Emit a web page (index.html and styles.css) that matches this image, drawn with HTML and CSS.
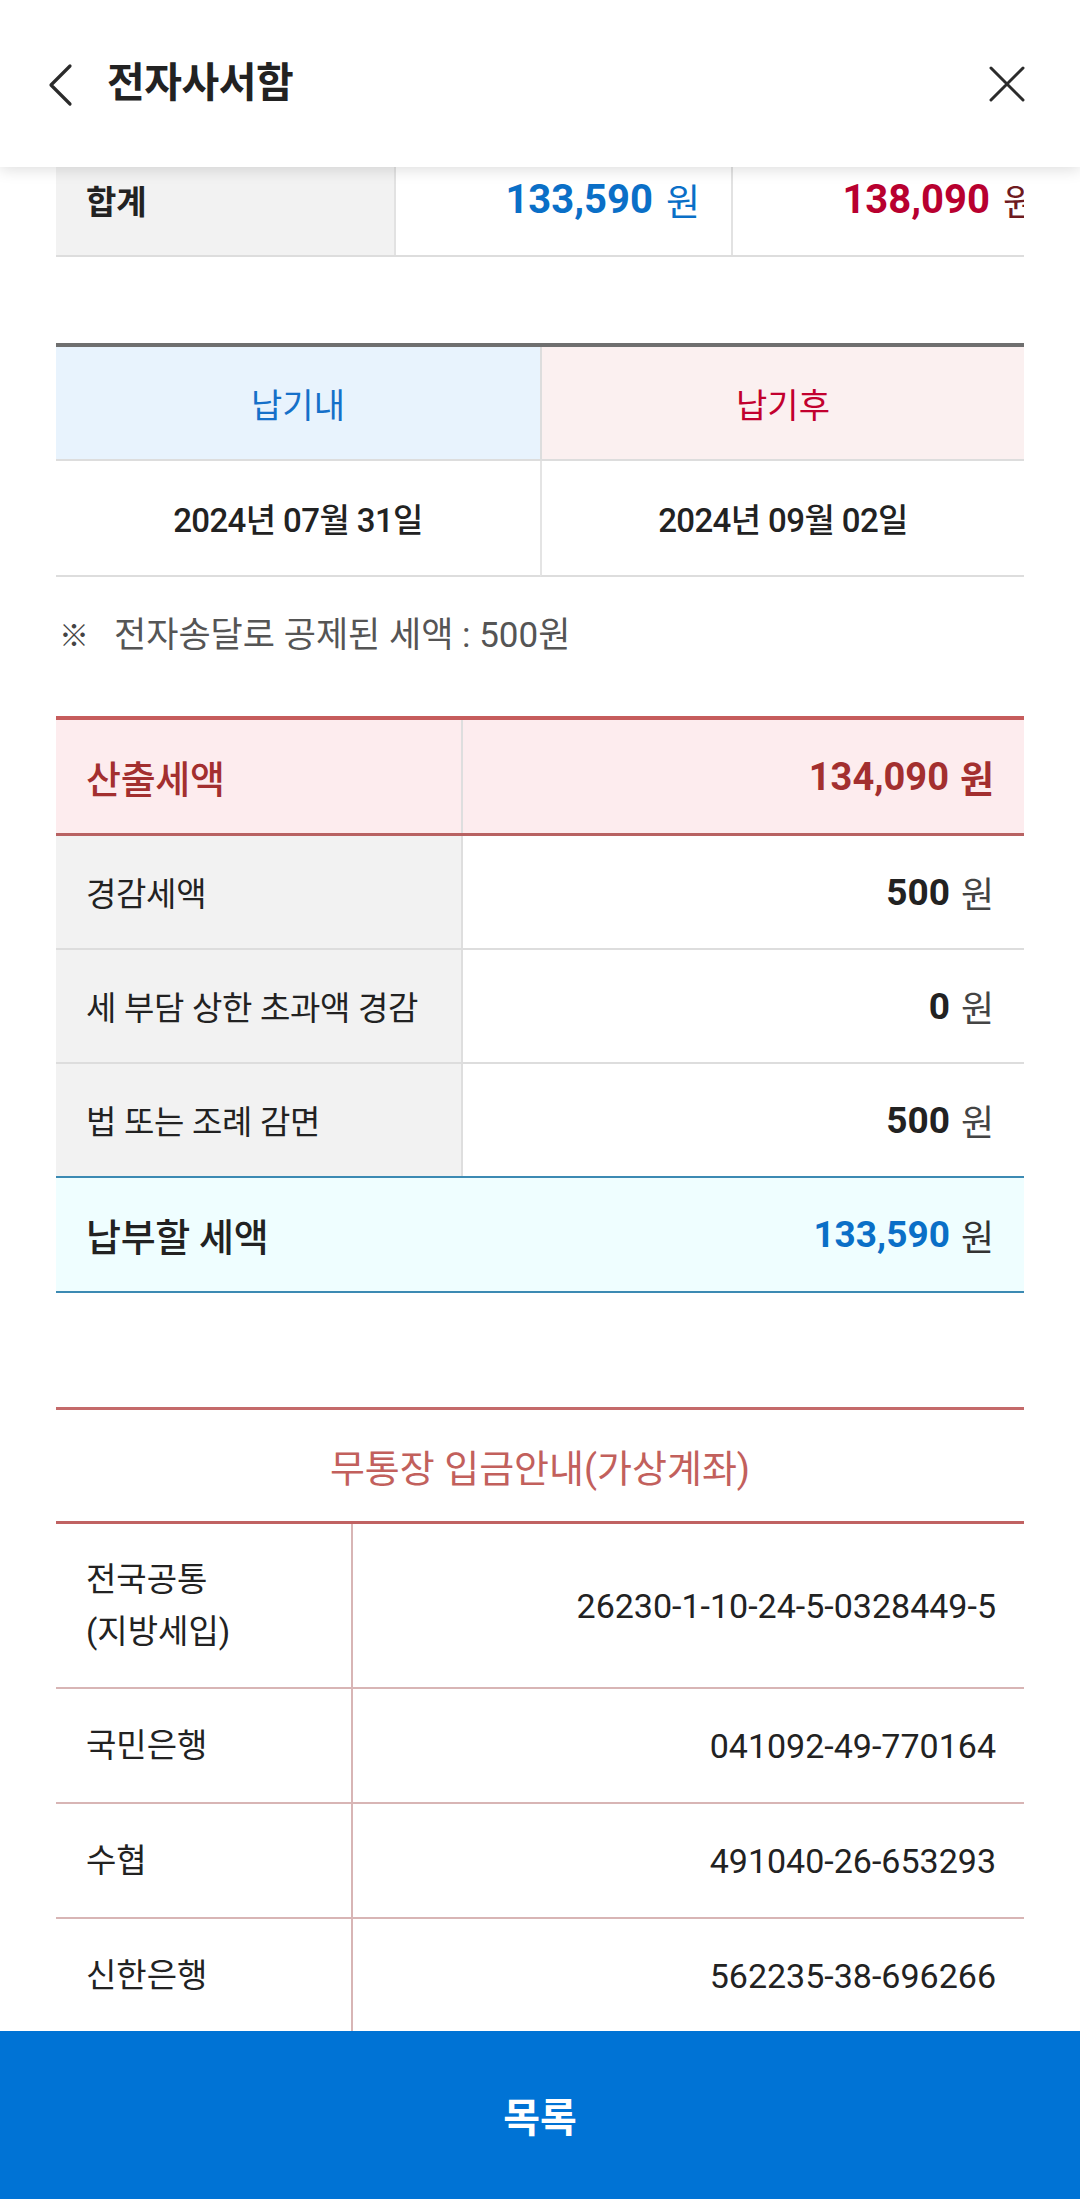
FILE: index.html
```html
<!DOCTYPE html>
<html lang="ko">
<head>
<meta charset="utf-8">
<title>전자사서함</title>
<link rel="stylesheet" href="styles.css">
</head>
<body>
<div class="screen">
  <header class="appbar">
    <svg class="back" width="30" height="44" viewBox="0 0 30 44" aria-hidden="true">
      <polyline points="22,3 3,22 22,41" fill="none" stroke="#2b2b2b" stroke-width="3.2" stroke-linecap="round" stroke-linejoin="round"/>
    </svg>
    <h1 class="title">전자사서함</h1>
    <svg class="close" width="38" height="38" viewBox="0 0 38 38" aria-hidden="true">
      <path d="M3 3 L35 35 M35 3 L3 35" fill="none" stroke="#2b2b2b" stroke-width="3" stroke-linecap="round"/>
    </svg>
  </header>

  <main class="content">
    <div class="sum-wrap">
      <div class="sum-table">
        <div class="sum-label">합계</div>
        <div class="sum-cell"><span class="num c-blue">133,590</span><span class="won c-blue">원</span></div>
        <div class="sum-cell"><span class="num c-red">138,090</span><span class="won c-maroon">원</span></div>
      </div>
    </div>

    <div class="due-table">
      <div class="due-head due-in">납기내</div>
      <div class="due-head due-after">납기후</div>
      <div class="due-date">2024년 07월 31일</div>
      <div class="due-date">2024년 09월 02일</div>
    </div>

    <p class="note"><span class="mark">※</span>전자송달로 공제된 세액 : 500원</p>

    <div class="tax-table">
      <div class="tax-row tax-calc">
        <div class="tax-label">산출세액</div>
        <div class="tax-value"><span class="num">134,090</span><span class="won">원</span></div>
      </div>
      <div class="tax-row">
        <div class="tax-label">경감세액</div>
        <div class="tax-value"><span class="num">500</span><span class="won">원</span></div>
      </div>
      <div class="tax-row">
        <div class="tax-label">세 부담 상한 초과액 경감</div>
        <div class="tax-value"><span class="num">0</span><span class="won">원</span></div>
      </div>
      <div class="tax-row tax-last">
        <div class="tax-label">법 또는 조례 감면</div>
        <div class="tax-value"><span class="num">500</span><span class="won">원</span></div>
      </div>
      <div class="tax-row tax-pay">
        <div class="tax-label">납부할 세액</div>
        <div class="tax-value"><span class="num c-blue">133,590</span><span class="won">원</span></div>
      </div>
    </div>

    <section class="bank">
      <h2 class="bank-title">무통장 입금안내(가상계좌)</h2>
      <div class="bank-table">
        <div class="bank-row bank-tall">
          <div class="bank-name">전국공통<br>(지방세입)</div>
          <div class="bank-acct">26230-1-10-24-5-0328449-5</div>
        </div>
        <div class="bank-row">
          <div class="bank-name">국민은행</div>
          <div class="bank-acct">041092-49-770164</div>
        </div>
        <div class="bank-row">
          <div class="bank-name">수협</div>
          <div class="bank-acct">491040-26-653293</div>
        </div>
        <div class="bank-row">
          <div class="bank-name">신한은행</div>
          <div class="bank-acct">562235-38-696266</div>
        </div>
      </div>
    </section>
  </main>

  <footer class="bottom">
    <button class="list-btn" type="button">목록</button>
  </footer>
</div>
</body>
</html>
```

FILE: styles.css
```css
* { box-sizing: border-box; }

html, body {
  margin: 0;
  padding: 0;
  background: #ffffff;
}

body {
  font-family: Roboto, "Noto Sans CJK KR", "Noto Sans", sans-serif;
  color: #222222;
}

.screen {
  width: 1080px;
  height: 2199px;
  display: flex;
  flex-direction: column;
  overflow: hidden;
}

/* ---------- app bar ---------- */
.appbar {
  position: relative;
  z-index: 2;
  flex: 0 0 167px;
  height: 167px;
  background: #ffffff;
  display: flex;
  align-items: center;
  padding: 0 54px 0 48px;
  box-shadow: 0 3px 14px rgba(0, 0, 0, 0.13);
}

.back { flex: 0 0 auto; margin-top: 2px; }

.title {
  flex: 1;
  margin: 0 0 0 29px;
  font-size: 41px;
  font-weight: 700;
  line-height: 1;
  color: #222222;
  letter-spacing: -0.5px;
}

.close { flex: 0 0 auto; }

/* ---------- content ---------- */
.content {
  flex: 1;
  overflow: hidden;
  margin-top: -23px;
  padding: 0 56px;
}

.num { font-weight: 700; }
.won { font-weight: 400; margin-left: 11px; }
.c-blue { color: #0a6fc7; }
.c-red { color: #b8002f; }
.c-maroon { color: #6e1a1f; }

/* sum row (horizontally clipped table) */
.sum-wrap {
  width: 968px;
  overflow: hidden;
}

.sum-table {
  width: 1012px;
  display: grid;
  grid-template-columns: 338px 337px 337px;
  height: 113px;
  border-bottom: 2px solid #dddddd;
}

.sum-label {
  background: #f2f2f2;
  display: flex;
  align-items: center;
  padding-left: 30px;
  font-size: 33px;
  font-weight: 700;
  color: #222222;
}

.sum-cell {
  border-left: 2px solid #e2e2e2;
  display: flex;
  align-items: center;
  justify-content: flex-end;
  padding-right: 31px;
  font-size: 40px;
}

.sum-cell .won { font-size: 37px; margin-left: 13px; }

/* due dates */
.due-table {
  margin-top: 86px;
  border-top: 4px solid #6f6f6f;
  display: grid;
  grid-template-columns: 484px 484px;
  grid-template-rows: 114px 116px;
}

.due-head,
.due-date {
  display: flex;
  align-items: center;
  justify-content: center;
  border-bottom: 2px solid #dddddd;
}

.due-head { font-size: 34px; font-weight: 400; }
.due-in { background: #e8f3fd; color: #1570c9; }
.due-after { background: #fbf0f0; color: #c2002e; border-left: 2px solid #dddddd; }

.due-date {
  font-size: 33px;
  font-weight: 500;
  color: #222222;
  letter-spacing: -0.6px;
}
.due-date:nth-child(4) { border-left: 2px solid #e4e4e4; }

.note {
  margin: 35px 0 56px;
  padding-left: 3px;
  font-size: 35px;
  line-height: 48px;
  color: #555555;
  display: flex;
  align-items: center;
}

.mark {
  width: 55px;
  font-size: 30px;
  color: #444444;
}

/* tax table */
.tax-table {
  border-top: 4px solid #c65c5c;
}

.tax-row {
  display: grid;
  grid-template-columns: 407px 561px;
  height: 114px;
  border-bottom: 2px solid #dddddd;
}

.tax-label {
  background: #f2f2f2;
  display: flex;
  align-items: center;
  padding-left: 30px;
  font-size: 33px;
  color: #222222;
  border-right: 2px solid #dedede;
  letter-spacing: -0.3px;
}

.tax-value {
  display: flex;
  align-items: center;
  justify-content: flex-end;
  padding-right: 30px;
  font-size: 37px;
  color: #222222;
}

.tax-value .won { font-size: 36px; color: #444444; }

.tax-calc {
  height: 116px;
  background: #fdecee;
  border-bottom: 3px solid #b86262;
}
.tax-calc .tax-label {
  background: transparent;
  font-size: 38px;
  font-weight: 500;
  color: #a32f2f;
}
.tax-calc .tax-value { color: #a32f2f; font-size: 38px; }
.tax-calc .won { color: #a32f2f; font-weight: 700; font-size: 37px; }

.tax-last { border-bottom: none; height: 112px; }

.tax-pay {
  height: 117px;
  background: #effeff;
  border-top: 2px solid #3c8ab3;
  border-bottom: 2px solid #3c8ab3;
}
.tax-pay .tax-label {
  background: transparent;
  border-right: none;
  font-size: 38px;
  font-weight: 500;
  color: #222222;
}
.tax-pay .won { color: #333333; }

/* bank */
.bank {
  margin-top: 114px;
  border-top: 3px solid #c46a6a;
}

.bank-title {
  margin: 0;
  height: 114px;
  display: flex;
  align-items: center;
  justify-content: center;
  font-size: 38px;
  font-weight: 400;
  color: #c2605c;
  border-bottom: 3px solid #c06262;
}

.bank-row {
  display: grid;
  grid-template-columns: 297px 671px;
  height: 115px;
  border-bottom: 2px solid #d8b5b5;
}

.bank-tall { height: 165px; }

.bank-name {
  display: flex;
  align-items: center;
  padding-left: 30px;
  font-size: 33px;
  line-height: 52px;
  color: #222222;
  border-right: 2px solid #d8b5b5;
}

.bank-acct {
  display: flex;
  align-items: center;
  justify-content: flex-end;
  padding-right: 28px;
  font-size: 34px;
  color: #222222;
}

/* bottom button */
.bottom {
  flex: 0 0 168px;
  height: 168px;
  background: #0073d5;
}

.list-btn {
  width: 100%;
  height: 100%;
  border: 0;
  margin: 0;
  background: transparent;
  color: #ffffff;
  font-family: Roboto, "Noto Sans CJK KR", sans-serif;
  font-size: 40px;
  font-weight: 700;
  padding: 0;
}
```
